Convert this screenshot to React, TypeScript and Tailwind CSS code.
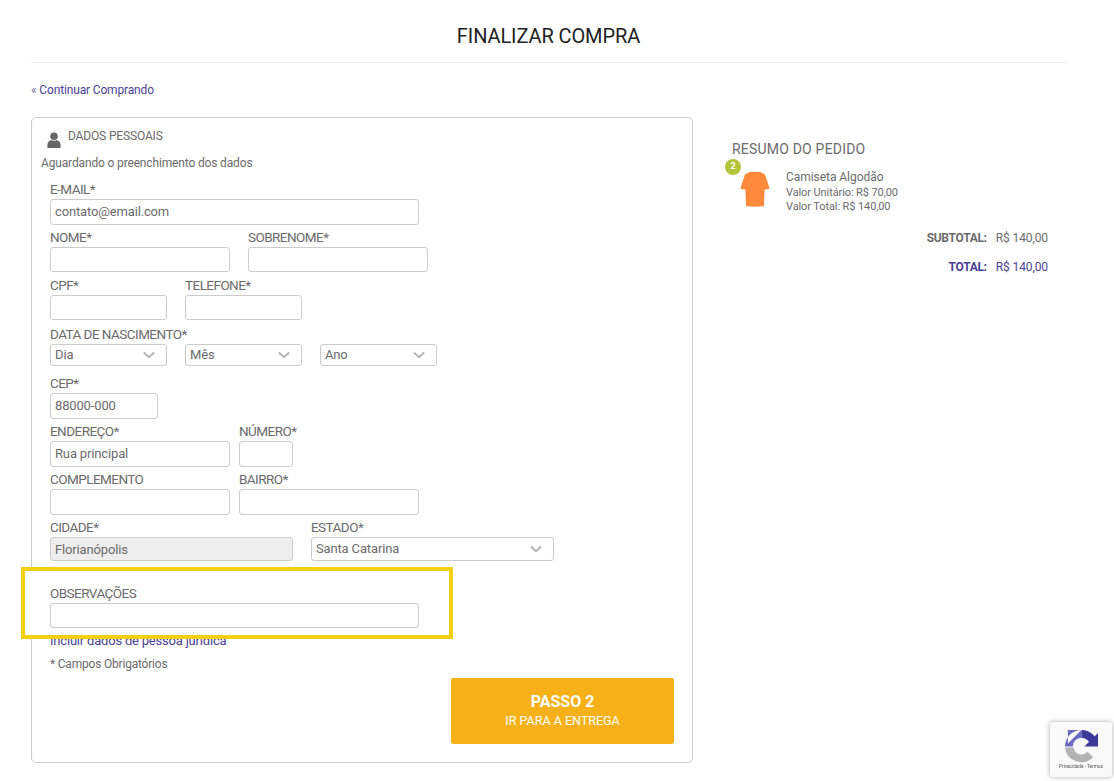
import type { ReactNode } from 'react';

const inputClass =
  'block h-full w-full rounded-[3px] border border-[#ccc] px-1 text-[13px] tracking-[-0.15px] text-[#6b6b6b] outline-none';

const labelClass = 'block h-[20px] text-[13.500px] leading-[20px] tracking-[-0.55px] text-[#6b6b6b]';

function Field({ label, width, children }: { label: string; width: string; children: ReactNode }) {
  return (
    <div className={width}>
      <label className={labelClass}>{label}</label>
      {children}
    </div>
  );
}

function TextField({
  label,
  width,
  value = '',
  height = 'h-[26px]',
  disabled = false,
}: {
  label: string;
  width: string;
  value?: string;
  height?: string;
  disabled?: boolean;
}) {
  return (
    <Field label={label} width={width}>
      <div className={height}>
        <input
          defaultValue={value}
          disabled={disabled}
          className={`${inputClass} ${disabled ? 'bg-[#eee]' : 'bg-white pb-[2px]'}`}
        />
      </div>
    </Field>
  );
}

function SelectField({ value, height = 'h-[22px]' }: { value: string; height?: string }) {
  return (
    <div className={`relative ${height}`}>
      <select defaultValue={value} className={`${inputClass} appearance-none bg-white`}>
        <option>{value}</option>
      </select>
      <svg
        viewBox="0 0 14 8"
        className="pointer-events-none absolute right-[12px] top-1/2 h-[7px] w-[12px] -translate-y-1/2"
        fill="none"
        stroke="#b5b5b5"
        strokeWidth="2.4"
      >
        <path d="M1 1l6 5.5L13 1" />
      </svg>
    </div>
  );
}

function ShirtIcon() {
  return (
    <svg viewBox="0 0 30 36" className="h-[36px] w-[30px]">
      <path
        d="M9.5 1 L20.500 1 L25 3.500 L29.500 17 L29 18 L24.500 18.500 L24 35 Q15 36.500 6 35 L5.500 18.500 L1 18 L.5 17 L5 3.500 Z"
        fill="#ff8a3c"
      />
      <path d="M12 1.500 Q15 5 18 1.500" fill="none" stroke="#f47a28" strokeWidth="1" />
    </svg>
  );
}

export default function App() {
  return (
    <div className="min-h-screen bg-white pl-[31px] pr-[48px] font-['Roboto',sans-serif] text-[#6b6b6b]">
      <h1 className="flex h-[63px] items-center justify-center border-b border-[#eee] pt-[9px] text-[20px] tracking-[-0.1px] text-[#222]">
        FINALIZAR COMPRA
      </h1>

      <a href="#" className="mt-[19px] block h-[16px] text-[12px] leading-[16px] tracking-[-0.15px] text-[#4a3f94]">
        <span className="text-[#6f6f9a]">«</span> Continuar Comprando
      </a>

      <div className="mt-[19px] flex items-start">
        <div className="h-[646px] w-[662px] shrink-0 rounded-[5px] border border-[#ccc] pl-[9px] pr-[18px]">
          <div className="flex h-[32px] items-start pl-[6px] pt-[11px]">
            <svg viewBox="0 0 14 17" className="mr-[7px] mt-[3px] h-[16px] w-[14px]" fill="#666">
              <circle cx="7" cy="4.500" r="4" />
              <path d="M0 17v-3.500C0 10.500 2.500 9 4.500 8.500 6 9.700 8 9.700 9.500 8.500 11.500 9 14 10.500 14 13.500V17z" />
            </svg>
            <h2 className="text-[12px] leading-[14px] tracking-[-0.15px]">DADOS PESSOAIS</h2>
          </div>
          <p className="mt-[5px] h-[20px] text-[12px] leading-[16px] tracking-[-0.15px]">
            Aguardando o preenchimento dos dados
          </p>

          <div className="ml-[9px] mt-[4px] flex flex-col gap-[2px]">
            <div className="flex h-[46px] gap-[18px]">
              <TextField label="E-MAIL*" width="w-[369px]" value="contato@email.com" />
            </div>
            <div className="flex h-[46px] gap-[18px]">
              <TextField label="NOME*" width="w-[180px]" height="h-[25px]" />
              <TextField label="SOBRENOME*" width="w-[180px]" height="h-[25px]" />
            </div>
            <div className="flex h-[47px] gap-[18px]">
              <TextField label="CPF*" width="w-[117px]" height="h-[25px]" />
              <TextField label="TELEFONE*" width="w-[117px]" height="h-[25px]" />
            </div>
            <div className="h-[47px]">
              <label className={labelClass}>DATA DE NASCIMENTO*</label>
              <div className="flex gap-[18px]">
                <div className="w-[117px]"><SelectField value="Dia" /></div>
                <div className="w-[117px]"><SelectField value="Mês" /></div>
                <div className="w-[117px]"><SelectField value="Ano" /></div>
              </div>
            </div>
            <div className="flex h-[46px] gap-[18px]">
              <TextField label="CEP*" width="w-[108px]" value="88000-000" />
            </div>
            <div className="flex h-[46px] gap-[9px]">
              <TextField label="ENDEREÇO*" width="w-[180px]" value="Rua principal" />
              <TextField label="NÚMERO*" width="w-[54px]" />
            </div>
            <div className="flex h-[46px] gap-[9px]">
              <TextField label="COMPLEMENTO" width="w-[180px]" />
              <TextField label="BAIRRO*" width="w-[180px]" />
            </div>
            <div className="flex h-[46px] gap-[18px]">
              <TextField label="CIDADE*" width="w-[243px]" value="Florianópolis" height="h-[24px]" disabled />
              <Field label="ESTADO*" width="w-[243px]">
                <SelectField value="Santa Catarina" height="h-[24px]" />
              </Field>
            </div>
          </div>

          <div className="relative z-10 -ml-[20px] mt-[4px] h-[72px] w-[432px] border-[4px] border-[#f3d012] bg-white pl-[25px] pt-[12px]">
            <TextField label="OBSERVAÇÕES" width="w-[369px]" height="h-[25px]" />
          </div>

          <a
            href="#"
            className="-mt-[6px] ml-[9px] block h-[16px] text-[13px] leading-[16px] tracking-[-0.2px] text-[#4a3f94]"
          >
            Incluir dados de pessoa jurídica
          </a>
          <p className="ml-[9px] mt-[7px] text-[12px] leading-[16px] tracking-[-0.2px]">* Campos Obrigatórios</p>

          <div className="mt-[6px] flex justify-end">
            <button className="flex h-[66px] w-[223px] flex-col items-center justify-center rounded-[2px] bg-[#f7b118] text-white">
              <span className="text-[16px] font-bold leading-[20px]">PASSO 2</span>
              <span className="text-[12.500px] leading-[18px]">IR PARA A ENTREGA</span>
            </button>
          </div>
        </div>

        <div className="ml-[39px] w-[316px] shrink-0 pt-[23px]">
          <h3 className="text-[14px] leading-[18px] tracking-[0.2px]">RESUMO DO PEDIDO</h3>
          <div className="mt-[9px] flex">
            <div className="relative ml-[8px] mt-[4px] w-[30px]">
              <ShirtIcon />
              <span className="absolute -left-[15px] -top-[12px] flex h-[16px] w-[16px] items-center justify-center rounded-full bg-[#b4c43a] text-[9px] font-bold text-white">
                2
              </span>
            </div>
            <div className="ml-[16px] mt-[2px]">
              <p className="text-[12px] leading-[16px] tracking-[-0.05px]">Camiseta Algodão</p>
              <p className="mt-[1px] text-[11px] leading-[14px] tracking-[-0.1px]">Valor Unitário: R$ 70,00</p>
              <p className="text-[11px] leading-[14px] tracking-[-0.1px]">Valor Total: R$ 140,00</p>
            </div>
          </div>
          <div className="mt-[16px] flex justify-end gap-[9px] text-[12px] leading-[16px]">
            <span className="font-bold tracking-[-0.3px]">SUBTOTAL:</span>
            <span className="tracking-[-0.1px]">R$ 140,00</span>
          </div>
          <div className="mt-[13px] flex justify-end gap-[9px] text-[12px] leading-[16px] text-[#4a3f94]">
            <span className="font-bold tracking-[-0.3px]">TOTAL:</span>
            <span className="tracking-[-0.1px]">R$ 140,00</span>
          </div>
        </div>
      </div>

      <div className="fixed bottom-[4px] right-[2px] flex h-[55px] w-[62px] flex-col items-center rounded-[3px] bg-[#f9f9f9] pt-[7px] shadow-[0_0_5px_rgba(0,0,0,0.35)]">
        <svg viewBox="0 0 36 36" className="h-[35px] w-[35px]">
          <path d="M18 1 A17 17 0 0 0 1 18 H9 A9 9 0 0 1 18 9 Z M4 1 H18 L4 15 Z" fill="#6a6ac0" />
          <path d="M18 1 A17 17 0 0 1 35 18 H27 A9 9 0 0 0 18 9 Z M35 4 V18 H21 Z" fill="#3b3a98" />
          <path d="M1 19 H10 A8 8 0 0 0 24 23.500 L30 29 A17 17 0 0 1 1 19 Z" fill="#b3b3b3" />
        </svg>
        <span className="text-[4.700px] leading-[6px] text-[#555]">Privacidade - Termos</span>
      </div>
    </div>
  );
}
